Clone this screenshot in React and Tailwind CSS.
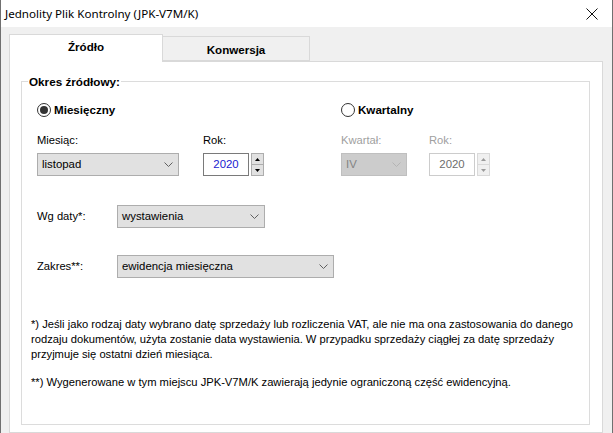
const font = { fontFamily: '"Liberation Sans", Arial, sans-serif' };

function Chevron({ disabled }) {
  return (
    <svg width="9" height="5" viewBox="0 0 9 5" className="shrink-0">
      <path d="M0.5 0.5 L4.5 4.5 L8.5 0.5" fill="none" stroke={disabled ? '#b4b4b4' : '#606060'} strokeWidth="1" />
    </svg>
  );
}

function Select({ value, width, disabled }) {
  return (
    <div
      className={`flex h-[23px] items-center justify-between border pl-[4px] pr-[5px] text-[11.4px] ${
        disabled ? 'border-[#bfbfbf] bg-[#cccccc] text-[#838383]' : 'border-[#adadad] bg-[#e1e1e1] text-black'
      }`}
      style={{ width }}
    >
      <span>{value}</span>
      <Chevron disabled={disabled} />
    </div>
  );
}

function Arrow({ up, disabled }) {
  return (
    <svg width="5" height="3" viewBox="0 0 5 3">
      <path d={up ? 'M0 3 L2.5 0 L5 3 Z' : 'M0 0 L2.5 3 L5 0 Z'} fill={disabled ? '#9a9a9a' : '#000'} />
    </svg>
  );
}

function YearInput({ disabled }) {
  const btn = disabled ? 'border-[#d9d9d9] bg-[#f0f0f0]' : 'border-[#adadad] bg-[#e1e1e1]';
  return (
    <div className="flex items-center gap-[2px]">
      <div
        className={`flex h-[23px] w-[46px] items-center justify-center border bg-white text-[11.4px] ${
          disabled ? 'border-[#cccccc] text-[#6d6d6d]' : 'border-[#7a7a7a] text-[#1a1ad0]'
        }`}
      >
        2020
      </div>
      <div className="flex h-[23px] w-[13px] flex-col">
        <div className={`flex h-[12px] items-center justify-center border ${btn}`}>
          <Arrow up disabled={disabled} />
        </div>
        <div className={`-mt-px flex h-[12px] items-center justify-center border ${btn}`}>
          <Arrow disabled={disabled} />
        </div>
      </div>
    </div>
  );
}

function Radio({ checked, label }) {
  return (
    <div className="flex h-[14px] items-center gap-[3px]">
      <div className="flex h-[14px] w-[14px] items-center justify-center rounded-full border border-[#333333] bg-white">
        {checked && <div className="h-[8px] w-[8px] rounded-full bg-[#333333]" />}
      </div>
      <span className="text-[11.6px] font-bold text-black">{label}</span>
    </div>
  );
}

export default function App() {
  return (
    <div
      className="flex h-[433px] w-[613px] flex-col overflow-hidden border-x border-[#707070] bg-[#f0f0f0] text-black"
      style={font}
    >
      <div className="flex h-[27px] shrink-0 items-center justify-between bg-white pl-[4px] pr-[14px]">
        <span className="text-[11.6px]" style={{ fontFamily: '"Noto Sans", "Liberation Sans", sans-serif' }}>
          Jednolity Plik Kontrolny (JPK-V7M/K)
        </span>
        <svg width="12" height="12" viewBox="0 0 12 12">
          <path d="M0.5 0.5 L11.5 11.5 M11.5 0.5 L0.5 11.5" stroke="#111" strokeWidth="1" />
        </svg>
      </div>

      <div className="flex flex-1 flex-col pl-[8px] pr-[9px] pt-[7px]">
        <div className="relative z-10 flex h-[28px] items-start">
          <div className="flex h-[28px] w-[154px] items-center justify-center border border-b-0 border-[#d9d9d9] bg-white pb-[3px] text-[11.6px] font-bold">
            Źródło
          </div>
          <div className="mt-[2px] flex h-[25px] w-[147px] items-center justify-center border border-l-0 border-[#d9d9d9] bg-[#f0f0f0] pt-[2px] text-[11.6px] font-bold">
            Konwersja
          </div>
        </div>

        <div className="-mt-px flex-1 border border-[#d9d9d9] bg-white pl-[11px] pr-[12px] pt-[19px]">
          <div className="relative h-[344px] border border-[#dcdcdc] pl-[15px] pt-[21px]">
            <span className="absolute -top-[9px] left-[6px] bg-white px-[1px] text-[11.7px] font-bold">Okres źródłowy:</span>

            <div className="flex">
              <div className="w-[304px]">
                <Radio checked label="Miesięczny" />
                <div className="mt-[16px] flex">
                  <div className="w-[166px]">
                    <div className="text-[11.2px] leading-[14px]">Miesiąc:</div>
                    <div className="mt-[6px]">
                      <Select value="listopad" width={142} />
                    </div>
                  </div>
                  <div>
                    <div className="text-[11.2px] leading-[14px]">Rok:</div>
                    <div className="mt-[6px]">
                      <YearInput />
                    </div>
                  </div>
                </div>
              </div>
              <div>
                <Radio label="Kwartalny" />
                <div className="mt-[16px] flex">
                  <div className="w-[88px]">
                    <div className="text-[11.2px] leading-[14px] text-[#a0a0a0]">Kwartał:</div>
                    <div className="mt-[6px]">
                      <Select value="IV" width={66} disabled />
                    </div>
                  </div>
                  <div>
                    <div className="text-[11.2px] leading-[14px] text-[#a0a0a0]">Rok:</div>
                    <div className="mt-[6px]">
                      <YearInput disabled />
                    </div>
                  </div>
                </div>
              </div>
            </div>

            <div className="mt-[29px] flex items-center">
              <span className="w-[80px] text-[11.2px]">Wg daty*:</span>
              <Select value="wystawienia" width={148} />
            </div>

            <div className="mt-[27px] flex items-center">
              <span className="w-[80px] text-[11.2px]">Zakres**:</span>
              <Select value="ewidencja miesięczna" width={217} />
            </div>

            <div className="-ml-[6px] mt-[39px] whitespace-nowrap text-[11.2px] leading-[15px]">
              <p>
                *) Jeśli jako rodzaj daty wybrano datę sprzedaży lub rozliczenia VAT, ale nie ma ona zastosowania do danego
                <br />
                rodzaju dokumentów, użyta zostanie data wystawienia. W przypadku sprzedaży ciągłej za datę sprzedaży
                <br />
                przyjmuje się ostatni dzień miesiąca.
              </p>
              <p className="mt-[13px]">**) Wygenerowane w tym miejscu JPK-V7M/K zawierają jedynie ograniczoną część ewidencyjną.</p>
            </div>
          </div>
        </div>
      </div>
    </div>
  );
}
